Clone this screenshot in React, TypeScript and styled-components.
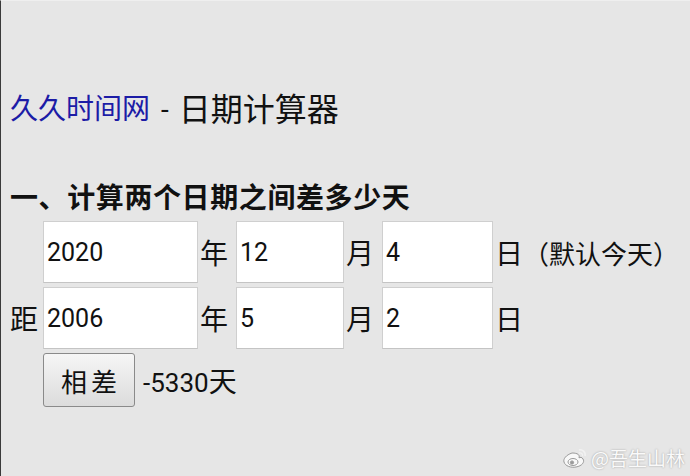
import React from 'react'
import styled, { createGlobalStyle } from 'styled-components'

const GlobalStyle = createGlobalStyle`
  html, body {
    margin: 0;
    padding: 0;
    background: #e6e6e6;
  }
  body {
    font-family: Roboto, "Noto Sans CJK SC", sans-serif;
    color: #111;
  }
`

const Page = styled.div`
  position: relative;
  width: 690px;
  height: 476px;
  box-sizing: border-box;
  border-left: 1px solid #3a3a3a;
  border-top: 1px solid #efefef;
  padding: 87px 0 0 9px;
  overflow: hidden;
`

const Title = styled.h1`
  margin: 0;
  height: 44px;
  display: flex;
  align-items: center;
  font-size: 32px;
  font-weight: normal;
  line-height: 44px;
`

const SiteLink = styled.a`
  color: #1c1ca6;
  font-size: 28px;
  text-decoration: none;
`

const Dash = styled.span`
  margin: 0 10px 0 11px;
  font-size: 28px;
`

const Section = styled.h2`
  margin: 50px 0 0;
  font-size: 28px;
  font-weight: bold;
  line-height: 34px;
  letter-spacing: 0.6px;
`

const Form = styled.div`
  display: flex;
  flex-direction: column;
  gap: 4px;
  margin-top: 5px;
`

const Row = styled.div`
  display: flex;
  align-items: center;
  font-size: 28px;
`

const Lead = styled.span`
  width: 33px;
  flex: none;
`

const Field = styled.input<{ w: number }>`
  width: ${({ w }) => w}px;
  height: 62px;
  box-sizing: border-box;
  border: 1px solid #cfcfcf;
  border-bottom-color: #c4c4c4;
  background: #fff;
  padding: 0 3px;
  font-family: Roboto, sans-serif;
  font-size: 25px;
  color: #111;
  outline: none;
`

const Unit = styled.span`
  margin: 0 8px 0 2px;
  white-space: nowrap;
`

const Note = styled.span`
  font-size: 26px;
`

const Button = styled.button`
  width: 92px;
  height: 54px;
  box-sizing: border-box;
  border: 1px solid #8a8a8a;
  border-radius: 3px;
  background: linear-gradient(#f6f6f6, #dcdcdc);
  font-family: "Noto Sans CJK SC", sans-serif;
  font-size: 26px;
  color: #111;
  padding: 0;
  letter-spacing: 4px;
  text-indent: 4px;
`

const Result = styled.span`
  margin-left: 8px;
  font-size: 26px;
`

const ResultUnit = styled.span`
  font-size: 28px;
`

const Watermark = styled.div`
  position: absolute;
  right: 5px;
  bottom: 5px;
  display: flex;
  align-items: center;
  gap: 3px;
  font-family: "Noto Sans CJK SC", sans-serif;
  font-size: 19px;
  color: #fafafa;
  text-shadow: 0 0 2px rgba(0, 0, 0, 0.35);
`

const WeiboLogo = () => (
  <svg width="26" height="22" viewBox="0 0 26 22">
    <g fill="none" stroke="#9a9a9a" strokeWidth="1">
      <path d="M10 6 C4 8 1 12 2 15 C3 19 9 21 14 20 C20 19 23 15 21 12 C20 10 18 10 17 11 C18 8 16 6 10 6 Z" fill="#f8f8f8" />
      <ellipse cx="11" cy="15" rx="5" ry="3.5" fill="#f8f8f8" />
      <circle cx="10" cy="15.5" r="1.6" fill="#9a9a9a" />
      <path d="M17 3 C20 2 24 5 23 9" strokeWidth="1.6" stroke="#f2f2f2" />
      <path d="M17 6 C19 5.5 21 7 20.5 9" strokeWidth="1.4" stroke="#f2f2f2" />
    </g>
  </svg>
)

const App = () => {
  return (
    <Page>
      <GlobalStyle />
      <Title>
        <SiteLink href="#">久久时间网</SiteLink>
        <Dash>-</Dash>
        日期计算器
      </Title>
      <Section>一、计算两个日期之间差多少天</Section>
      <Form>
        <Row>
          <Lead />
          <Field w={155} defaultValue="2020" />
          <Unit>年</Unit>
          <Field w={108} defaultValue="12" />
          <Unit>月</Unit>
          <Field w={111} defaultValue="4" />
          <Unit>
            日<Note>（默认今天）</Note>
          </Unit>
        </Row>
        <Row>
          <Lead>距</Lead>
          <Field w={155} defaultValue="2006" />
          <Unit>年</Unit>
          <Field w={108} defaultValue="5" />
          <Unit>月</Unit>
          <Field w={111} defaultValue="2" />
          <Unit>日</Unit>
        </Row>
        <Row>
          <Lead />
          <Button>相差</Button>
          <Result>
            -5330<ResultUnit>天</ResultUnit>
          </Result>
        </Row>
      </Form>
      <Watermark>
        <WeiboLogo />
        @吾生山林
      </Watermark>
    </Page>
  )
}

export default App
